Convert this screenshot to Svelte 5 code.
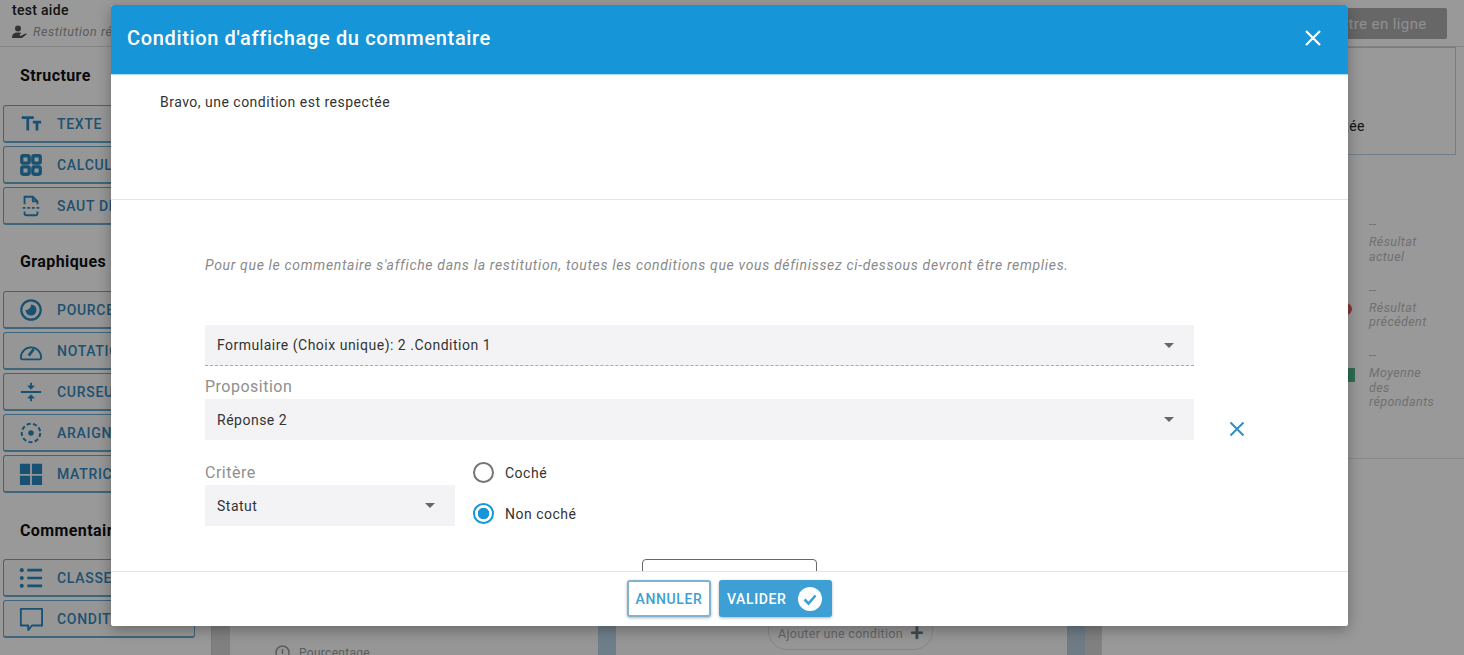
<script>
  const groups = [
    { title: 'Structure', items: [['tt', 'TEXTE'], ['grid', 'CALCUL'], ['page', 'SAUT DE PAGE']] },
    { title: 'Graphiques', items: [['pie', 'POURCENTAGE'], ['gauge', 'NOTATION'], ['cursor', 'CURSEUR'], ['spider', 'ARAIGNÉE'], ['matrix', 'MATRICE']] },
    { title: 'Commentaires', items: [['list', 'CLASSEMENT'], ['bubble', 'CONDITIONNEL']] }
  ];
  const stats = [
    { kind: 'none', lines: ['Résultat', 'actuel'] },
    { kind: 'red', lines: ['Résultat', 'précédent'] },
    { kind: 'green', lines: ['Moyenne', 'des', 'répondants'] }
  ];
</script>

<div class="page">
  <header class="topbar">
    <div class="heading">
      <div class="name">test aide</div>
      <div class="sub">
        <svg width="16" height="14" viewBox="0 0 16 14"><circle cx="6" cy="3.4" r="3" fill="#555"/><path d="M0 13c0-4 2-5.500 6-5.500 1.500 0 2.500.2 3.300.6L7.500 10l1 1 5-2.500 1.500.5-5 4z" fill="#555"/></svg>
        <span>Restitution réponse</span>
      </div>
    </div>
    <button class="publish">Mettre en ligne</button>
  </header>

  <div class="body">
    <aside class="side">
      {#each groups as g}
        <h3>{g.title}</h3>
        <div class="tools">
          {#each g.items as [icon, label]}
            <div class="tool">
              <svg class="ti" width="26" height="26" viewBox="0 0 26 26" fill="none" stroke="#2a88be" stroke-width="2">
                {#if icon === 'tt'}
                  <path d="M3 6h13M9.500 6v14M15 11h9M19.500 11v9" stroke-width="3"/>
                {:else if icon === 'grid'}
                  <rect x="3" y="3" width="8" height="8" rx="1.500" stroke-width="3.600"/><rect x="15" y="3" width="8" height="8" rx="1.500" stroke-width="3.600"/><rect x="3" y="15" width="8" height="8" rx="1.500" stroke-width="3.600"/><rect x="15" y="15" width="8" height="8" rx="1.500" stroke-width="3.600"/>
                {:else if icon === 'page'}
                  <path d="M6 11V3h9l5 5v3M6 19v2a2 2 0 0 0 2 2h10a2 2 0 0 0 2-2v-2M15 3v5h5"/><path d="M4 15h18" stroke-dasharray="3 2"/>
                {:else if icon === 'pie'}
                  <circle cx="13" cy="13" r="10.500" stroke-width="2.400"/><path d="M13 7a6 6 0 1 1-6 6c3 0 6-2 6-6z" fill="#2a88be" stroke="none"/>
                {:else if icon === 'gauge'}
                  <path d="M4 22a2 2 0 0 1-2-2 11 11 0 0 1 22 0 2 2 0 0 1-2 2z"/><path d="M10.500 18l5.500-7" stroke-width="2.800"/>
                {:else if icon === 'cursor'}
                  <path d="M2 13h22"/><path d="M13 3v6M13 17v6"/><path d="M9.500 6.500l3.500 3.500 3.500-3.500zM9.500 19.500l3.500-3.500 3.500 3.500z" fill="#2a88be" stroke-width="1"/>
                {:else if icon === 'spider'}
                  <circle cx="13" cy="13" r="10" stroke-dasharray="4.500 2.500" stroke-width="2.200"/><circle cx="13" cy="13" r="3" fill="#2a88be" stroke="none"/>
                {:else if icon === 'matrix'}
                  <path d="M1 2h11v11H1zM14 2h11v11H14zM1 15h11v10H1zM14 15h11v10H14z" fill="#2a88be" stroke="none"/>
                {:else if icon === 'list'}
                  <path d="M9 4.500h16M9 13h16M9 21.500h16" stroke-width="2.800"/><circle cx="3" cy="4.500" r="2.200" fill="#2a88be" stroke="none"/><circle cx="3" cy="13" r="2.200" fill="#2a88be" stroke="none"/><circle cx="3" cy="21.500" r="2.200" fill="#2a88be" stroke="none"/>
                {:else}
                  <path d="M2 2h23v18H14l-4 5v-5H2z" stroke-linejoin="round"/>
                {/if}
              </svg>
              <span>{label}</span>
            </div>
          {/each}
        </div>
      {/each}
    </aside>

    <main class="center">
      <div class="col first">
        <div class="legend">
          <svg width="15" height="15" viewBox="0 0 15 15" fill="none" stroke="#999" stroke-width="1.500"><circle cx="7.500" cy="7.500" r="6.500"/><path d="M7.500 4v5" /></svg>
          Pourcentage
        </div>
      </div>
      <div class="col second">
        <div class="add">Ajouter une condition <b>+</b></div>
      </div>
    </main>

    <aside class="right">
      <div class="note"><span>Bravo, une condition est respectée</span></div>
      <div class="stats">
        {#each stats as s}
          <div class="stat">
            <div class="mark">
              {#if s.kind === 'red'}<span class="red"></span>{/if}
              {#if s.kind === 'green'}<span class="green"></span>{/if}
            </div>
            <div>
              <div class="dash">--</div>
              {#each s.lines as line}<div>{line}</div>{/each}
            </div>
          </div>
        {/each}
      </div>
    </aside>
  </div>

  <div class="overlay"></div>

  <section class="dialog">
    <div class="dhead">
      <h2>Condition d'affichage du commentaire</h2>
      <svg width="18" height="18" viewBox="0 0 18 18" fill="none" stroke="#fff" stroke-width="2.200"><path d="M2 2l14 14M16 2L2 16"/></svg>
    </div>
    <div class="comment">Bravo, une condition est respectée</div>
    <div class="form">
      <p class="hint">Pour que le commentaire s'affiche dans la restitution, toutes les conditions que vous définissez ci-dessous devront être remplies.</p>
      <div class="cond">
        <div class="fields">
          <div class="select dashed"><span>Formulaire (Choix unique): 2 .Condition 1</span><i></i></div>
          <div class="lab prop">Proposition</div>
          <div class="select"><span>Réponse 2</span><i></i></div>
        </div>
        <svg class="remove" width="16" height="16" viewBox="0 0 16 16" fill="none" stroke="#2f8fc4" stroke-width="2"><path d="M1.500 1.500l13 13M14.500 1.500l-13 13"/></svg>
      </div>
      <div class="crit">
        <div class="critl">
          <div class="lab">Critère</div>
          <div class="select"><span>Statut</span><i></i></div>
        </div>
        <div class="radios">
          <div class="radio"><span class="dot"></span>Coché</div>
          <div class="radio on"><span class="dot"></span>Non coché</div>
        </div>
      </div>
      <div class="addbox"></div>
    </div>
    <div class="dfoot">
      <button class="cancel">ANNULER</button>
      <button class="ok">VALIDER
        <svg width="24" height="24" viewBox="0 0 24 24"><circle cx="12" cy="12" r="12" fill="#fff"/><path d="M6.500 12.500l4 4 7-8" fill="none" stroke="#3d9fd3" stroke-width="2.600"/></svg>
      </button>
    </div>
  </section>
</div>

<style>
  :global(body) { margin: 0; background: #fff; }
  .page { width: 1464px; height: 655px; overflow: hidden; position: relative; font-family: Roboto, "Liberation Sans", sans-serif; color: #222; background: #f6f6f6; }
  .topbar { height: 47px; box-sizing: border-box; display: flex; justify-content: space-between; align-items: flex-start; padding: 2px 17px 0 12px; border-bottom: 1px solid #ddd; background: #fff; }
  .name { font-size: 14px; font-weight: 500; letter-spacing: .3px; line-height: 16px; }
  .sub { display: flex; align-items: center; gap: 5px; margin-top: 6px; font-size: 12.500px; font-style: italic; letter-spacing: .55px; color: #999; white-space: nowrap; }
  .publish { margin-top: 6px; width: 160px; height: 31px; border: 0; border-radius: 2px; background: #aeacad; color: #eee; font: 15px Roboto, sans-serif; letter-spacing: .4px; display: flex; align-items: center; justify-content: center; padding-left: 20px; }
  .body { display: flex; height: 608px; }
  .side { width: 212px; flex: none; box-sizing: border-box; padding: 0 16px 0 3px; border-right: 1px solid #ccc; background: #fff; }
  .side h3 { margin: 0; padding: 20px 0 20px 17px; font-size: 16px; line-height: 18px; font-weight: 700; letter-spacing: .4px; color: #111; white-space: nowrap; }
  .side .tools + h3 { padding-top: 28px; }
  .side .tools + h3:last-of-type { padding-top: 29px; padding-bottom: 19px; }
  .tools { display: flex; flex-direction: column; gap: 3px; }
  .tool { height: 38px; width: 192px; box-sizing: border-box; display: flex; align-items: center; gap: 14px; padding-left: 15px; border: 1px solid #6aa8cc; border-bottom-width: 2px; border-radius: 3px; color: #3488ba; font-size: 14px; font-weight: 500; letter-spacing: .7px; white-space: nowrap; overflow: hidden; background: #fafafa; }
  .ti { flex: none; width: 24px; height: 24px; }
  .center { flex: none; width: 889px; box-sizing: border-box; display: grid; grid-template-columns: 386px 469px; align-items: end; padding: 0 14px 0 18px; background: #d6d6d6; }
  .col { height: 60px; box-sizing: border-box; background: #fafafa; border-right: 18px solid #b9d4e7; position: relative; }
  .second { border-right-color: #b9cfe0; }
  .legend { position: absolute; left: 45px; bottom: -5px; display: flex; align-items: center; gap: 9px; font-size: 12px; letter-spacing: .3px; color: #999; white-space: nowrap; }
  .add { position: absolute; left: 152px; top: 17px; height: 38px; width: 165px; box-sizing: border-box; padding: 11px 0 0 9px; border: 1px solid #ddd; border-radius: 20px; color: #a9a9a9; font-size: 12.500px; letter-spacing: .3px; line-height: 20px; white-space: nowrap; }
  .add b { font-size: 24px; font-weight: 500; color: #777; margin-left: 4px; vertical-align: -3px; line-height: 14px; }
  .right { width: 363px; flex: none; background: #fff; border-left: 1px solid #ddd; box-sizing: border-box; }
  .note { height: 108px; box-sizing: border-box; margin-right: 8px; border: 1px solid #bcd4ea; display: flex; align-items: center; justify-content: flex-end; padding: 50px 90px 0 0; font-size: 14px; letter-spacing: .5px; white-space: nowrap; overflow: hidden; }
  .stats { height: 304px; box-sizing: border-box; padding: 63px 0 0 238px; font-size: 12.500px; letter-spacing: .4px; line-height: 14.500px; font-style: italic; color: #bbb; border-bottom: 1px solid #e4e4e4; }
  .stat { display: flex; margin-bottom: 19.500px; }
  .mark { width: 29px; flex: none; padding-top: 19px; }
  .red { display: block; width: 12px; height: 12px; border-radius: 50%; background: #e25a5a; }
  .green { display: block; width: 15px; height: 14px; background: #4fb58a; }
  .dash { margin-bottom: 5px; line-height: 12px; }

  .overlay { position: absolute; inset: 0; background: rgba(0, 0, 0, .4); }
  .dialog { position: absolute; left: 111px; top: 5px; width: 1237px; height: 621px; background: #fff; border-radius: 3px; box-shadow: 0 4px 14px rgba(0,0,0,.3); display: flex; flex-direction: column; overflow: hidden; }
  .dhead { height: 70px; flex: none; background: #1696d9; border-bottom: 1px solid #a6e0f6; display: flex; align-items: center; justify-content: space-between; padding: 0 26px 4px 16px; box-sizing: border-box; color: #fff; }
  .dhead h2 { margin: 0; font-size: 20px; font-weight: 500; letter-spacing: .65px; }
  .comment { height: 125px; flex: none; box-sizing: border-box; padding: 19px 0 0 49px; font-size: 14px; letter-spacing: .49px; line-height: 16px; color: #333; border-bottom: 1px solid #e4e4e4; }
  .form { flex: 1; min-height: 0; padding: 0 0 0 94px; position: relative; overflow: hidden; }
  .hint { margin: 57px 0 0; font-size: 14px; font-style: italic; letter-spacing: .67px; line-height: 17px; color: #8a8a8a; white-space: nowrap; }
  .cond { display: flex; align-items: flex-end; gap: 35px; margin-top: 51px; }
  .fields { width: 989px; }
  .select { height: 41px; box-sizing: border-box; background: #f3f3f5; display: flex; align-items: center; justify-content: space-between; padding: 0 20px 0 12px; font-size: 14px; letter-spacing: .5px; color: #333; }
  .select.dashed { border-bottom: 1px dashed #aaa; }
  .select i { width: 0; height: 0; border: 5px solid transparent; border-top-color: #666; border-bottom: 0; }
  .lab { font-size: 16px; line-height: 19px; color: #8f8f8f; letter-spacing: .5px; margin-bottom: 3px; }
  .prop { margin-top: 11px; }
  .remove { margin-bottom: 3px; }
  .crit { display: flex; margin-top: 23px; }
  .critl { width: 250px; }
  .radios { margin-left: 18px; margin-top: -1px; display: flex; flex-direction: column; gap: 20px; }
  .radio { display: flex; align-items: center; gap: 11px; height: 21px; font-size: 14px; letter-spacing: .5px; color: #333; }
  .dot { width: 21px; height: 21px; box-sizing: border-box; border: 2px solid #757575; border-radius: 50%; display: block; }
  .on .dot { border-color: #1696d9; background: radial-gradient(circle, #1696d9 0 5.500px, #fff 6px); }
  .addbox { position: absolute; left: 531px; top: 359px; width: 175px; height: 30px; box-sizing: border-box; border: 1px solid #666; border-radius: 4px; }
  .dfoot { height: 55px; flex: none; border-top: 1px solid #e4e4e4; background: #fff; position: relative; display: flex; justify-content: center; gap: 8px; padding: 8px 0 0; box-sizing: border-box; }
  .dfoot button { height: 37px; border-radius: 3px; font: 500 14px Roboto, sans-serif; letter-spacing: .6px; box-shadow: 0 1px 3px rgba(0,0,0,.3); }
  .cancel { width: 84px; background: #fff; color: #3d9fd3; border: 2px solid #7fb3d0; }
  .ok { width: 113px; background: #3d9fd3; color: #fff; border: 0; display: flex; align-items: center; justify-content: space-between; padding: 0 10px 0 8px; }
</style>
